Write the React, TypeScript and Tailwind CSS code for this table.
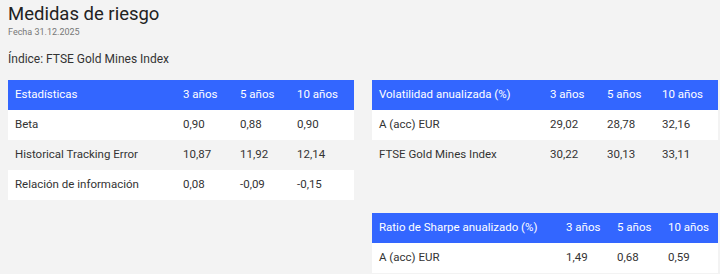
import React from "react"

// ─── Data ─────────────────────────────────────────────────────────────────────

type Table = {
  title: string
  cols: string // grid template
  rows: string[][]
}

const STATS: Table = {
  title: "Estadísticas",
  cols: "grid-cols-[168px_57px_57px_64px]",
  rows: [
    ["Beta", "0,90", "0,88", "0,90"],
    ["Historical Tracking Error", "10,87", "11,92", "12,14"],
    ["Relación de información", "0,08", "-0,09", "-0,15"],
  ],
}

const VOLATILITY: Table = {
  title: "Volatilidad anualizada (%)",
  cols: "grid-cols-[171px_57px_55px_63px]",
  rows: [
    ["A (acc) EUR", "29,02", "28,78", "32,16"],
    ["FTSE Gold Mines Index", "30,22", "30,13", "33,11"],
  ],
}

const SHARPE: Table = {
  title: "Ratio de Sharpe anualizado (%)",
  cols: "grid-cols-[187px_51px_51px_57px]",
  rows: [["A (acc) EUR", "1,49", "0,68", "0,59"]],
}

const YEARS = ["3 años", "5 años", "10 años"]

// ─── Risk table ───────────────────────────────────────────────────────────────

function RiskTable({ table }: { table: Table }) {
  return (
    <div className="w-[346px] text-[11.5px]">
      <div className={`grid h-[30px] items-center whitespace-nowrap bg-[#3366ff] text-white ${table.cols}`}>
        <span className="px-[7px]">{table.title}</span>
        {YEARS.map((y) => (
          <span key={y} className="px-[7px]">
            {y}
          </span>
        ))}
      </div>
      {table.rows.map((row, i) => (
        <div
          key={row[0]}
          className={`grid h-[30px] items-center whitespace-nowrap text-[#333333] ${table.cols} ${
            i % 2 === 0 ? "bg-white" : "bg-transparent"
          }`}
        >
          {row.map((cell, j) => (
            <span key={j} className="px-[7px]">
              {cell}
            </span>
          ))}
        </div>
      ))}
    </div>
  )
}

// ─── Page ─────────────────────────────────────────────────────────────────────

export default function App() {
  return (
    <div
      className="h-[274px] w-[720px] overflow-hidden bg-[#f3f3f3] px-2 text-[#2b2b2b]"
      style={{ fontFamily: "Roboto, 'Noto Sans', sans-serif" }}
    >
      <h1 className="pt-[2px] text-[18.5px] leading-[24px] text-[#222222]">Medidas de riesgo</h1>
      <p className="text-[9px] leading-[12px] text-[#777777]">Fecha 31.12.2025</p>
      <p className="mt-[13px] text-[12px] leading-[16px] text-[#333333]">Índice: FTSE Gold Mines Index</p>

      {/* Two columns; Sharpe sits in the second row under the volatility table */}
      <div className="mt-[13px] grid grid-cols-[346px_346px] items-start gap-x-[18px] gap-y-[13px]">
        <RiskTable table={STATS} />
        <RiskTable table={VOLATILITY} />
        <div />
        <RiskTable table={SHARPE} />
      </div>
    </div>
  )
}
